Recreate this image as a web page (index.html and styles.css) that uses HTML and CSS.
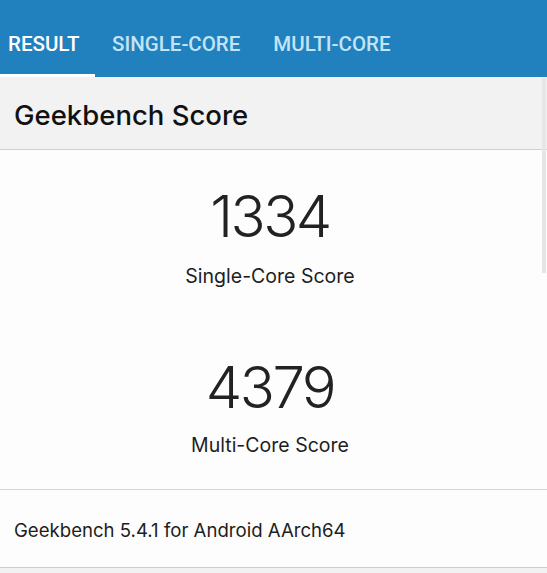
FILE: index.html
```html
<!DOCTYPE html>
<html>
<head>
<meta charset="utf-8">
<link rel="stylesheet" href="styles.css">
</head>
<body>
<div class="app">
  <nav class="tabs">
    <div class="tab tab-active">RESULT</div>
    <div class="tab">SINGLE-CORE</div>
    <div class="tab">MULTI-CORE</div>
  </nav>
  <div class="section-head">Geekbench Score</div>
  <div class="scores">
    <div class="score">
      <div class="score-num">1334</div>
      <div class="score-label">Single-Core Score</div>
    </div>
    <div class="score">
      <div class="score-num">4379</div>
      <div class="score-label">Multi-Core Score</div>
    </div>
  </div>
  <div class="footer-row">Geekbench 5.4.1 for Android AArch64</div>
  <div class="rest"></div>
  <div class="scrollbar"></div>
</div>
</body>
</html>
```
FILE: styles.css
```css
html, body {
  margin: 0;
  padding: 0;
  background: #f2f2f2;
}
.app {
  position: relative;
  width: 547px;
  height: 573px;
  overflow: hidden;
  font-family: "Inter", "Noto Sans", sans-serif;
  color: #1a1a1a;
}
.tabs {
  display: flex;
  height: 77px;
  background: #2180be;
  font-family: "Roboto", sans-serif;
  font-weight: 500;
  font-size: 20.5px;
}
.tab {
  display: flex;
  align-items: center;
  padding: 10px 16px 0 17px;
  color: #c3e4f6;
  box-sizing: border-box;
}
.tab-active {
  color: #ffffff;
  padding-left: 8px;
  width: 95px;
  border-bottom: 3px solid #ffffff;
  padding-top: 13px;
}
.section-head {
  height: 73px;
  box-sizing: border-box;
  padding: 4px 0 0 14px;
  display: flex;
  align-items: center;
  background: #f2f2f2;
  border-bottom: 1px solid #cfcfcf;
  font-size: 27.5px;
  font-weight: 500;
  color: #111;
}
.scores {
  background: #fdfdfd;
  padding-bottom: 32px;
  border-bottom: 1px solid #d6d6d6;
  padding-right: 7px;
}
.score {
  display: flex;
  flex-direction: column;
  align-items: center;
}
.score:first-child {
  padding-top: 31px;
}
.score + .score {
  padding-top: 64px;
}
.score + .score .score-label {
  margin-top: 11px;
}
.score-num {
  font-size: 58px;
  font-weight: 300;
  line-height: 70px;
  letter-spacing: -2.5px;
  color: #222;
}
.score-label {
  font-size: 19.5px;
  line-height: 24px;
  margin-top: 13px;
  color: #1e1e1e;
}
.footer-row {
  height: 78px;
  box-sizing: border-box;
  padding: 2px 0 0 14px;
  display: flex;
  align-items: center;
  background: #fdfdfd;
  border-bottom: 1px solid #cfcfcf;
  font-size: 18.6px;
  color: #1e1e1e;
}
.rest {
  height: 10px;
  background: #f2f2f2;
}
.scrollbar {
  position: absolute;
  right: 1px;
  top: 78px;
  width: 4px;
  height: 195px;
  background: #e6e6e6;
}
```
